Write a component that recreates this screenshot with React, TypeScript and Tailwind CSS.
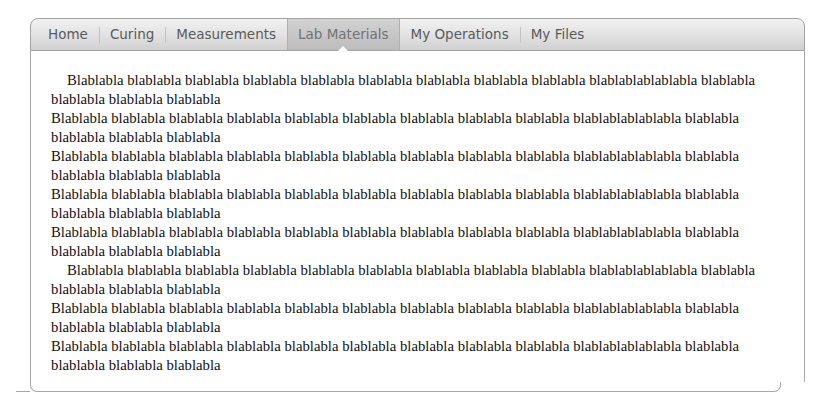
import React from 'react';

const tabs = ['Home', 'Curing', 'Measurements', 'Lab Materials', 'My Operations', 'My Files'];
const activeTab = 'Lab Materials';

const line =
  'blablabla blablabla blablabla blablabla blablabla blablabla blablabla blablabla blablablablablabla blablabla blablabla blablabla blablabla';

const paragraphs = [true, false, false, false, false, true, false, false];

export default function App() {
  return (
    <div className="h-[409px] bg-white pt-[18px]">
      <div className="ml-[16px] w-[789px]">
        {/* Tab bar */}
        <div className="ml-[14px] flex h-[33px] items-stretch rounded-t-[8px] border border-[#a3a3a3] bg-linear-to-b from-[#f1f1f1] via-[#e3e3e3] to-[#d0d0d0] pl-[6px] font-['DejaVu_Sans',sans-serif] text-[13.5px] text-[#5a5a5a]">
          {tabs.map((tab, i) => {
            const isActive = tab === activeTab;
            const prevActive = tabs[i - 1] === activeTab;
            return (
              <div
                key={tab}
                className={`relative flex items-center ${
                  isActive
                    ? 'border-x border-[#b0b0b0] bg-linear-to-b from-[#d2d2d2] to-[#bcbcbc] px-[10px] text-[#727272]'
                    : 'px-[11px]'
                }`}
              >
                {i > 0 && !isActive && !prevActive && (
                  <span className="absolute left-0 top-[8px] h-[16px] w-px bg-[#c4c4c4]" />
                )}
                <span>{tab}</span>
                {isActive && (
                  <span className="absolute bottom-[-1px] left-1/2 -ml-[5px] h-0 w-0 border-x-[5px] border-b-[5px] border-x-transparent border-b-white" />
                )}
              </div>
            );
          })}
        </div>

        {/* Content */}
        <div className="ml-[14px] border-x border-[#a8a8a8] bg-white pl-[20px] pr-[19px] pt-[20px] pb-[7px] font-['Liberation_Serif',serif] text-[14.75px] leading-[19px] text-[#111]">
          {paragraphs.map((indent, i) => (
            <p key={i} className={indent ? 'indent-4' : ''}>
              {'Blablabla ' + line}
            </p>
          ))}
        </div>

        {/* Bottom edge */}
        <div className="flex">
          <div className="w-[14px] border-b border-[#a8a8a8]" />
          <div className="h-[10px] w-[751px] rounded-b-[7px] border-x border-b border-[#a8a8a8] border-t-0" />
        </div>
      </div>
    </div>
  );
}
